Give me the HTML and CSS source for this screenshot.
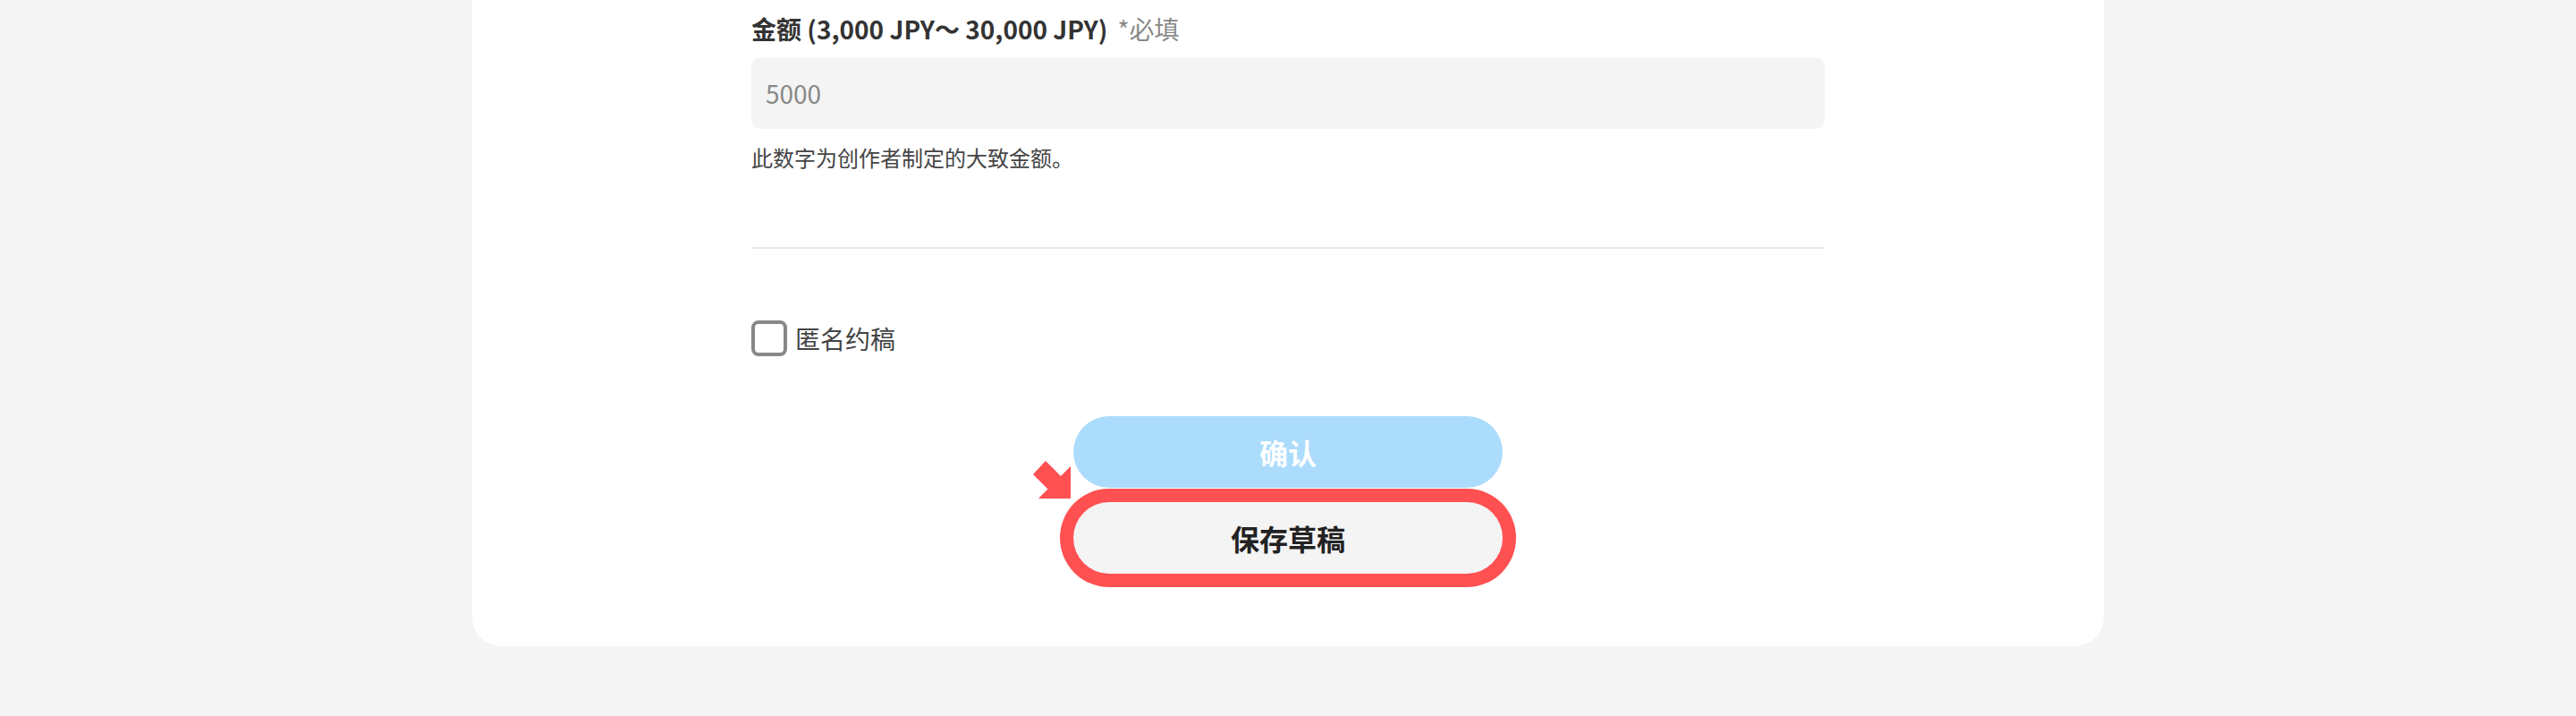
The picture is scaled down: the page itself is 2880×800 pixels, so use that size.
FILE: index.html
```html
<!DOCTYPE html>
<html lang="zh-CN">
<head>
<meta charset="utf-8">
<title>约稿</title>
<link rel="stylesheet" href="styles.css">
</head>
<body>
<div class="card">
  <div class="field">
    <div class="label"><span class="label-main">金额 (3,000 JPY～ 30,000 JPY)</span><span class="required">*必填</span></div>
    <div class="input"><span class="placeholder">5000</span></div>
    <p class="help">此数字为创作者制定的大致金额。</p>
  </div>
  <hr class="divider">
  <label class="check-row">
    <span class="checkbox"></span>
    <span class="check-label">匿名约稿</span>
  </label>
  <div class="actions">
    <button class="btn btn-confirm">确认</button>
    <div class="save-wrap">
      <svg class="arrow" width="42" height="42" viewBox="0 0 42 42"><polygon points="14,1 31,18 42,7 42,42 7,42 17.5,31.5 1,15" fill="#ff5052" stroke="#ff5052" stroke-width="1.5" stroke-linejoin="round"/></svg>
      <button class="btn btn-save">保存草稿</button>
    </div>
  </div>
</div>
</body>
</html>
```
FILE: styles.css
```css
* { box-sizing: border-box; }
body {
  margin: 0;
  background: #f4f4f4;
  font-family: "Noto Sans CJK SC", "Noto Sans", sans-serif;
  color: #333;
}
.card {
  width: 1824px;
  margin: 0 auto;
  background: #fff;
  border-radius: 0 0 32px 32px;
  padding: 12px 312px 81px;
}
.label {
  height: 40px;
  line-height: 40px;
  font-size: 28px;
  display: flex;
  align-items: center;
  gap: 11px;
}
.label-main { font-weight: 700; color: #333; }
.required { color: #888; font-weight: 400; }
.input {
  margin-top: 12px;
  height: 80px;
  background: #f4f4f4;
  border-radius: 10px;
  display: flex;
  align-items: center;
  padding: 0 16px;
  font-size: 28px;
}
.placeholder { color: #888; }
.help {
  margin: 12px 0 0;
  line-height: 40px;
  font-size: 24px;
  color: #444;
}
.divider {
  margin: 80px 0 0;
  border: 0;
  height: 2px;
  background: #e8e8e8;
}
.check-row {
  margin-top: 80px;
  display: flex;
  align-items: center;
  gap: 9px;
  height: 40px;
}
.checkbox {
  width: 40px;
  height: 40px;
  border: 4px solid #888;
  border-radius: 8px;
  background: #fff;
}
.check-label {
  font-size: 28px;
  color: #444;
}
.actions {
  margin-top: 67px;
  display: flex;
  flex-direction: column;
  align-items: center;
  gap: 16px;
}
.btn {
  width: 480px;
  height: 80px;
  border: 0;
  border-radius: 40px;
  font-family: inherit;
  font-size: 32px;
  font-weight: 700;
  padding: 0;
}
.btn-confirm {
  background: #acdcfc;
  color: #fff;
}
.save-wrap { position: relative; }
.btn-save {
  background: #f4f4f4;
  color: #222;
  box-shadow: 0 0 0 15px #ff5052;
  display: block;
}
.arrow {
  position: absolute;
  left: -45px;
  top: -46px;
}
```
